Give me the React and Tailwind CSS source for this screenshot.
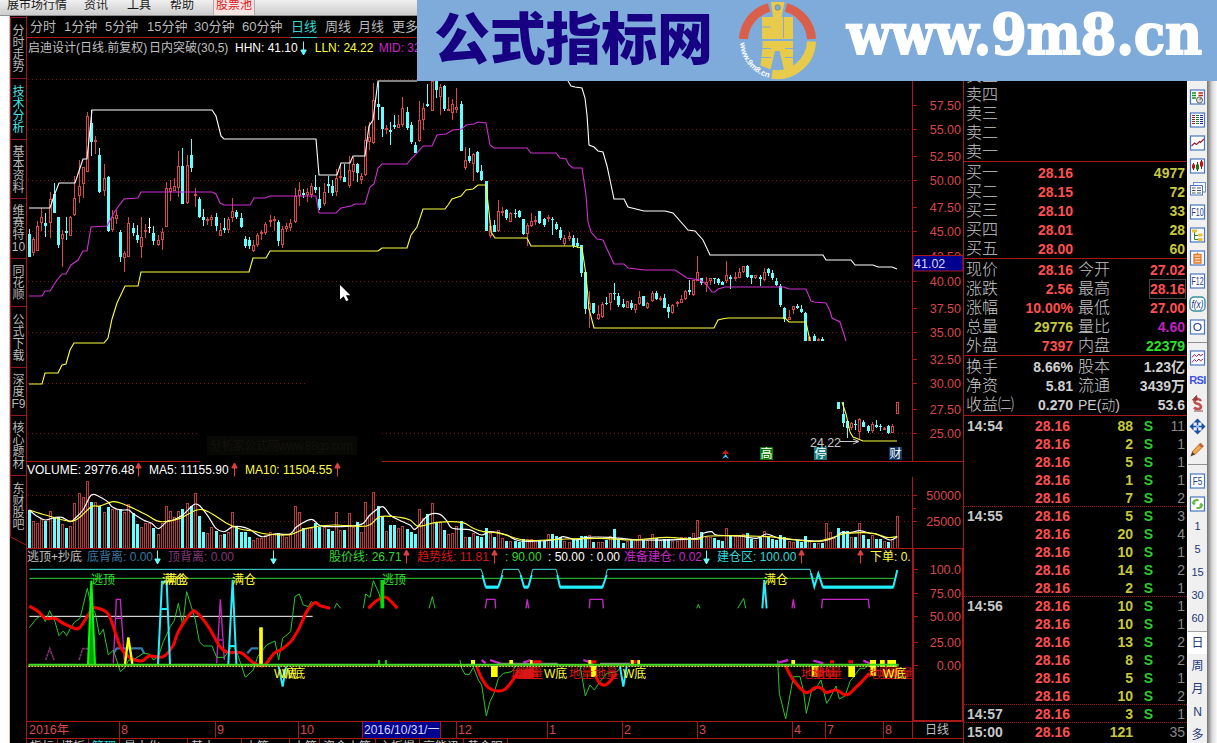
/**
 * Stock terminal: daily candlestick view with volume and indicator panes,
 * a level-1 quote panel and the tool strip on the right.
 */
import clsx from "clsx";

const PITCH = 4.152;
const FIRST_X = 29.3;
const UP = "#d84848";
const DOWN = "#66ffff";
const LINE = "#a81818";

// One entry per trading day: [direction, high, body top, body bottom, low]; null = not drawn
const CANDLES = [
  ["d", 229, 234, 257, 257], ["u", 237, 239, 253, 256], ["u", 221, 226, 251, 251], ["u", 208, 217, 223, 231],
  ["d", 213, 223, 226, 237], ["u", 192, 199, 223, 238], ["d", 183, 194, 213, 213], ["d", 217, 217, 245, 248],
  ["u", 230, 234, 239, 267], ["d", 217, 231, 233, 240], ["u", 216, 217, 236, 236], ["u", 176, 198, 215, 216],
  ["u", 160, 186, 196, 203], ["u", 167, 167, 184, 198], ["u", 112, 116, 172, 172], ["d", 110, 123, 142, 156],
  ["u", 136, 140, 141, 154], ["d", 148, 155, 192, 193], ["u", 164, 178, 191, 196], ["d", 176, 177, 231, 232],
  ["u", 210, 217, 230, 232], ["u", 210, 215, 219, 224], ["d", 230, 232, 257, 262], ["u", 251, 253, 258, 272],
  ["u", 217, 223, 257, 257], ["d", 223, 228, 233, 236], ["d", 225, 235, 240, 243], ["u", 217, 237, 247, 258],
  ["u", 224, 230, 232, 238], ["w", 218, 227, 228, 233], ["d", 226, 233, 241, 245], ["u", 235, 240, 245, 246],
  ["u", 228, 232, 240, 250], ["u", 182, 188, 227, 227], ["u", 180, 188, 192, 201], ["u", 178, 186, 191, 191],
  ["u", 151, 166, 188, 197], ["d", 148, 166, 204, 204], ["u", 155, 165, 203, 204], ["d", 139, 155, 168, 172],
  ["u", 188, 194, 196, 207], ["d", 197, 199, 217, 218], ["d", 209, 217, 220, 226], ["u", 217, 219, 221, 225],
  ["u", 215, 217, 220, 226], ["d", 213, 217, 226, 231], ["u", 223, 230, 236, 236], ["d", 218, 228, 230, 233],
  ["u", 217, 219, 230, 233], ["u", 198, 211, 218, 222], ["d", 210, 212, 217, 219], ["d", 213, 218, 227, 228],
  ["d", 236, 239, 246, 248], ["d", 237, 240, 246, 249], ["u", 240, 245, 251, 252], ["u", 233, 235, 245, 247],
  ["u", 230, 232, 234, 240], ["u", 222, 224, 233, 235], ["u", 215, 220, 222, 227], ["u", 216, 219, 221, 231],
  ["d", 220, 222, 241, 246], ["u", 226, 229, 245, 248], ["u", 223, 226, 229, 232], ["u", 219, 223, 228, 231],
  ["u", 188, 196, 222, 223], ["u", 182, 190, 196, 206], ["d", 189, 193, 195, 198], ["u", 188, 192, 195, 202],
  ["u", 183, 186, 195, 198], ["d", 175, 187, 190, 193], ["d", 187, 199, 208, 210], ["u", 183, 192, 204, 206],
  ["d", 176, 184, 186, 193], ["d", 180, 186, 193, 196], ["u", 169, 178, 192, 196], ["u", 165, 176, 178, 180],
  ["d", 164, 177, 182, 182], ["u", 156, 170, 186, 188], ["u", 157, 164, 172, 181], ["d", 163, 164, 173, 182],
  ["u", 173, 176, 180, 184], ["u", 126, 140, 175, 176], ["u", 122, 137, 142, 150], ["u", 83, 100, 143, 144],
  ["d", 82, 104, 107, 120], ["d", 107, 107, 129, 137], ["u", 125, 128, 129, 134], ["d", 122, 130, 132, 145],
  ["d", 115, 125, 127, 129], ["u", 115, 124, 128, 128], ["u", 97, 108, 125, 127], ["d", 107, 112, 128, 130],
  ["d", 122, 125, 142, 144], ["d", 142, 145, 153, 153], ["u", 101, 120, 141, 142], ["u", 103, 108, 120, 130],
  ["d", 84, 104, 106, 107], ["u", 81, 81, 111, 111], ["d", 81, 81, 90, 98], ["u", 84, 87, 97, 115],
  ["d", 85, 86, 109, 111], ["u", 97, 109, 111, 111], ["u", 99, 104, 113, 120], ["u", 88, 107, 110, 113],
  ["d", 101, 104, 151, 151], ["u", 147, 160, 168, 170], ["d", 148, 156, 161, 163], ["u", 153, 154, 164, 181],
  ["d", 151, 152, 172, 173], ["d", 165, 171, 180, 181], ["d", 181, 181, 231, 231], ["u", 220, 226, 236, 238],
  ["d", 220, 225, 232, 232], ["u", 200, 211, 231, 232], ["u", 207, 211, 213, 216], ["d", 209, 210, 218, 220],
  ["u", 212, 213, 222, 222], ["d", 209, 213, 214, 218], ["d", 210, 211, 217, 218], ["d", 219, 219, 234, 235],
  ["u", 223, 225, 234, 246], ["u", 213, 221, 226, 227], ["u", 216, 220, 221, 225], ["d", 211, 211, 223, 224],
  ["d", 218, 219, 225, 227], ["u", 215, 217, 219, 222], ["d", 217, 219, 220, 235], ["d", 222, 224, 229, 230],
  ["d", 227, 230, 238, 240], ["u", 235, 238, 244, 246], ["u", 232, 236, 239, 241], ["d", 235, 238, 246, 248],
  ["d", 238, 243, 246, 248], ["d", 245, 245, 273, 277], ["d", 270, 272, 309, 314], ["u", 291, 303, 310, 328],
  ["d", 303, 303, 313, 314], ["u", 305, 314, 319, 320], ["u", 302, 304, 317, 318], ["d", 297, 303, 304, 305],
  ["u", 293, 293, 303, 310], ["d", 283, 293, 294, 300], ["d", 293, 296, 305, 307], ["d", 299, 304, 307, 308],
  ["u", 301, 301, 308, 308], ["d", 300, 303, 308, 310], ["u", 304, 304, 310, 313], ["u", 291, 297, 304, 305],
  ["d", 296, 296, 306, 306], ["u", 302, 303, 308, 309], ["u", 291, 293, 301, 302], ["d", 291, 293, 299, 300],
  ["u", 296, 298, 299, 301], ["d", 294, 298, 308, 308], ["d", 304, 307, 312, 318], ["u", 304, 305, 313, 314],
  ["u", 301, 302, 304, 307], ["u", 295, 299, 303, 303], ["u", 290, 291, 299, 300], ["d", 280, 290, 292, 295],
  ["u", 280, 280, 295, 296], ["u", 256, 272, 281, 281], ["d", 278, 278, 283, 285], ["u", 277, 282, 285, 292],
  ["u", 278, 278, 281, 285], ["d", 278, 278, 279, 284], ["d", 278, 279, 283, 285], ["d", 281, 282, 285, 285],
  ["u", 261, 275, 281, 283], ["d", 275, 277, 279, 289], ["u", 272, 277, 279, 281], ["u", 268, 272, 278, 278],
  ["u", 266, 266, 272, 273], ["d", 265, 266, 277, 278], ["d", 275, 275, 278, 284], ["u", 275, 275, 278, 279],
  ["d", 275, 277, 279, 286], ["u", 268, 272, 280, 281], ["d", 268, 269, 273, 276], ["d", 270, 273, 278, 280],
  ["d", 278, 281, 285, 286], ["d", 284, 286, 305, 307], ["d", 307, 308, 319, 322], ["u", 310, 317, 320, 320],
  ["u", 306, 306, 310, 314], ["d", 304, 306, 308, 309], ["d", 305, 309, 312, 313], ["d", 312, 313, 341, 341],
  ["u", 336, 337, 341, 341], ["d", 334, 336, 341, 341], ["u", 338, 339, 341, 341], ["d", 337, 339, 341, 341],
  null, null, null,
  ["d", 402, 402, 409, 409], ["d", 402, 414, 423, 427], ["d", 420, 421, 428, 438], ["u", 422, 423, 428, 430],
  ["d", 420, 424, 425, 430], ["u", 418, 419, 432, 440], ["d", 420, 422, 427, 427], ["d", 425, 426, 431, 433],
  ["u", 422, 424, 431, 433], ["d", 420, 425, 427, 428], ["d", 424, 426, 427, 431], ["u", 427, 428, 429, 430],
  ["d", 425, 426, 433, 434], ["u", 424, 426, 433, 433], ["u", 402, 402, 414, 414],
];

// Top edge of each volume bar
const VOLUME = [
  510, 521, 523, 519, 521, 511, 517, 517, 524, 528, 526, 503, 493, 497, 481, 502, 502, 506, 512, 507,
  509, 509, 509, 512, 504, 513, 524, 527, 523, 523, 528, 534, 523, 506, 511, 517, 511, 509, 503, 506,
  493, 516, 532, 533, 527, 531, 535, 534, 532, 512, 526, 532, 532, 537, 540, 538, 538, 535, 532, 534,
  533, 535, 537, 534, 506, 512, 528, 528, 528, 523, 527, 527, 529, 531, 512, 530, 530, 513, 527, 522,
  532, 502, 515, 492, 506, 517, 531, 525, 525, 528, 526, 529, 532, 534, 509, 518, 514, 503, 522, 522,
  530, 534, 533, 526, 521, 537, 537, 533, 536, 537, 528, 533, 537, 530, 538, 541, 541, 541, 542, 539,
  539, 539, 540, 540, 541, 534, 534, 536, 537, 541, 542, 539, 539, 536, 536, 535, 542, 542, 542, 540,
  536, 529, 539, 543, 541, 540, 540, 535, 540, 540, 534, 538, 540, 539, 539, 541, 541, 537, 537, 537,
  533, 520, 532, 537, 537, 538, 540, 541, 528, 535, 536, 536, 534, 533, 539, 540, 537, 531, 537, 539,
  540, 535, 537, 541, 542, 540, 542, 536, 541, 543, 543, 543, 523, 532, 538, 528, 531, 531, 537, 537,
  523, 535, 539, 535, 539, 539, 541, 542, 539, 516,
];

const HHN = [
  "29,208 50,208 54,196 59,183 75,183 79,171 83,159 87,159 92,110 212,110 216,116 221,136 224,139 316,139 319,175 337,175 341,163 350,163 353,156 365,156 369,126 373,120 378,81 417,81",
  "568,81 571,86 575,87 582,88 585,98 587,115 589,145 594,147 598,151 603,152 607,166 610,180 614,199 624,199 628,207 640,210 644,211 665,211 673,213 688,230 695,231 703,240 710,255 823,255 826,260 851,260 855,265 873,265 878,267 892,267 897,269",
];
const MID =
  "29,296 42,296 45,291 50,291 57,280 62,274 66,274 71,265 78,260 83,251 87,251 91,227 107,226 115,211 124,199 138,198 141,192 212,192 216,194 220,203 224,205 250,205 254,198 265,198 270,196 316,196 319,213 336,213 341,208 351,206 355,204 365,204 370,187 374,184 378,168 382,164 407,164 411,159 417,153 423,146 432,146 437,135 446,134 453,130 462,129 466,125 474,124 478,122 486,123 490,145 494,148 527,148 531,153 556,153 560,158 566,159 569,165 573,168 582,168 586,195 588,222 591,232 597,239 603,240 607,249 614,264 624,264 628,268 645,270 675,270 687,278 700,280 706,284 712,292 715,292 718,289 725,287 784,287 789,289 806,289 811,301 814,302 826,303 830,311 832,318 840,322 846,341";
const LLN = [
  "29,384 42,384 45,373 58,373 62,365 66,364 70,350 74,343 104,343 108,338 112,319 117,303 125,286 138,286 141,272 249,272 253,258 266,258 270,251 378,251 382,248 407,248 411,235 417,227 423,209 445,209 448,205 452,199 461,196 466,190 473,189 478,185 486,185 489,212 491,232 495,238 527,238 531,246 573,246 582,248 586,275 589,309 594,328 714,328 718,320 722,319 728,318 785,318 789,322 806,322 810,341",
  "842,402 846,414 850,432 853,437 863,441 897,441",
];

// Volume and indicator traces are stored at three units per pixel
const MA5 =
  "88,150 110,168 136,180 165,172 186,172 211,185 225,175 249,150 274,105 298,110 323,125 336,140 361,150 386,150 398,160 430,180 455,190 475,206 500,185 520,180 548,165 574,140 586,132 600,138 625,170 648,205 673,215 698,200 722,200 748,208 785,230 822,222 870,222 890,200 934,178 960,197 1000,200 1060,198 1090,190 1110,165 1147,140 1170,165 1197,180 1230,195 1245,208 1270,180 1290,163 1320,163 1340,182 1357,205 1408,209 1445,225 1470,215 1520,225 1560,243 1660,240 1690,230 1730,240 1760,232 1830,232 1930,240 2090,235 2110,220 2135,215 2150,225 2220,228 2270,235 2300,222 2340,235 2430,242 2470,243 2505,232 2525,218 2550,218 2580,212 2610,220 2630,222 2670,240 2692,230";
const MA10 =
  "88,150 136,165 205,183 235,175 274,140 298,138 340,125 370,132 400,145 440,165 480,185 540,175 590,150 625,155 680,190 720,207 760,213 800,222 870,224 920,205 1000,195 1100,198 1140,170 1200,172 1230,180 1250,197 1270,197 1310,187 1385,187 1420,205 1450,215 1500,220 1570,240 1640,240 1700,237 1800,235 1900,240 2000,232 2090,238 2130,228 2300,230 2430,244 2480,238 2530,222 2580,218 2620,220 2660,232 2692,230";

const PRICE_LINE = [
  "88,503 110,475 125,465 136,485 149,452 165,485 177,527 190,513 200,527 211,505 223,487 240,475 262,385 274,440 286,460 298,525 310,508 325,585 340,570 361,635 375,622 386,600 400,600 430,580 448,582 460,600 475,590 490,545 511,500 523,482 535,430 548,495 560,395 574,440 586,480 598,545 611,558 636,558 650,592 673,592 698,555 710,575 736,652 760,630 773,590 800,555 825,543 836,600 848,535 872,515 885,410 898,402 910,435 925,440 934,425 942,432",
  "1003,445 1010,430 1022,445", "1090,445 1097,402 1110,412 1120,362 1137,400 1147,440",
  "1287,445 1297,410 1305,445", "2090,445 2095,433 2100,445", "2213,445 2231,415 2237,445",
  "1380,600 1385,625 1395,643 1408,643 1420,622 1435,660 1445,675 1459,768 1470,725 1482,700 1495,655 1510,640 1535,635 1550,615",
  "1740,615 1756,708 1770,675 1783,690 1800,665 1820,640 1850,635 1870,615",
  "2333,600 2338,700 2357,777 2380,650 2400,650 2410,690 2419,760 2435,690 2445,690 2463,660 2480,730 2490,715 2508,678 2518,717 2535,708 2550,665 2580,625 2595,625 2620,600",
];
const TREND_LINE = [
  "88,438 115,455 136,475 165,475 186,488 211,500 235,506 255,480 274,450 286,443 323,460 345,515 361,560 386,590 424,603 448,588 490,590 520,555 535,515 574,458 590,458 625,500 660,560 685,578 722,578 760,608 785,618 798,612 822,580 845,568 872,545 897,505 920,455 945,428 960,437 990,445",
  "1105,445 1130,422 1158,412 1192,445",
  "1430,620 1445,655 1465,683 1492,693 1515,688 1535,665 1555,635",
  "1770,612 1783,640 1800,670 1820,673 1850,640",
  "2355,615 2380,660 2418,698 2445,683 2465,685 2480,698 2508,690 2540,705 2570,680 2590,660 2608,640",
];
const MAGENTA_TRACES = [
  "340,610 349,418 361,418 373,600", "345,475 367,475", "650,610 661,418 673,600", "655,540 667,540",
  "1456,445 1460,418 1485,418 1487,445", "1578,445 1582,418 1586,445", "1768,445 1770,418 1808,418 1810,445",
  "2376,445 2380,418 2384,445", "2465,445 2467,418 2605,418 2608,445",
];
const CYAN_TRACES = [
  "474,612 486,365 500,365 510,612", "484,447 502,447", "685,612 698,360 709,612", "690,558 706,558",
  "2287,445 2293,360 2300,445", "836,620 848,680 858,620", "1860,620 1870,680 1880,620",
  "1447,345 1457,380 1495,380 1507,345", "1562,345 1572,380 1585,380 1595,345",
  "1672,345 1680,380 1808,380 1820,345", "2433,340 2443,380 2455,340 2468,380 2680,380 2692,330",
];
const CYAN_TOP = [
  "88,328 1443,328 1449,345", "1505,345 1509,328 1555,328 1563,345", "1594,345 1598,328 1668,328 1673,345",
  "1818,345 1822,328 2430,328 2434,345",
];

const PRICE_TICKS = [
  [105, "57.50"], [129.5, "55.00"], [156, "52.50"], [180.5, "50.00"], [207, "47.50"], [231, "45.00"],
  [256, "42.50"], [281.5, "40.00"], [308, "37.50"], [332.5, "35.00"], [359, "32.50"], [383.5, "30.00"],
  [409, "27.50"], [433.5, "25.00"],
];
const OSC_TICKS = [[569, "100.0"], [593.5, "75.00"], [616.5, "50.00"], [642.5, "25.00"], [665.5, "0.00"]];

const PERIODS = [
  ["分时", "w-[34px]"], ["1分钟", "w-[41px]"], ["5分钟", "w-[42px]"], ["15分钟", "w-[47px]"],
  ["30分钟", "w-[48px]"], ["60分钟", "w-[49px]"], ["日线", "w-[34px]"], ["周线", "w-[33px]"],
  ["月线", "w-[34px]"], ["更多", "w-[30px]"],
];

const SIDE_TABS = [
  { chars: ["分", "时", "走", "势"], h: "h-[61px]" },
  { chars: ["技", "术", "分", "析"], h: "h-[61px]", active: true },
  { chars: ["基", "本", "资", "料"], h: "h-[59px]" },
  { chars: ["维", "赛", "特", "10"], h: "h-[60px]" },
  { chars: ["同", "花", "顺"], h: "h-[48px]" },
  { chars: ["公", "式", "下", "载"], h: "h-[61px]" },
  { chars: ["深", "度", "F9"], h: "h-[48px]" },
  { chars: ["核", "心", "题", "材"], h: "h-[60px]" },
  { chars: ["东", "财", "股", "吧"], h: "h-[61px]" },
];

const BIDS = [
  ["买一", "28.16", "4977"], ["买二", "28.15", "72"], ["买三", "28.10", "33"], ["买四", "28.01", "28"], ["买五", "28.00", "60"],
];
const STATS = [
  ["现价", "28.16", "text-[#ff4f4f]", "今开", "27.02", "text-[#ff4f4f]"],
  ["涨跌", "2.56", "text-[#ff4f4f]", "最高", "28.16", "text-[#ff4f4f]"],
  ["涨幅", "10.00%", "text-[#ff4f4f]", "最低", "27.00", "text-[#ff4f4f]"],
  ["总量", "29776", "text-[#c8c83c]", "量比", "4.60", "text-[#c020c0]"],
  ["外盘", "7397", "text-[#ff4f4f]", "内盘", "22379", "text-[#2ce02c]"],
];
const FUNDAMENTALS = [
  ["换手", "8.66%", "text-[#d0d0d0]", "股本", "1.23亿", "text-[#d0d0d0]"],
  ["净资", "5.81", "text-[#d0d0d0]", "流通", "3439万", "text-[#d0d0d0]"],
  ["收益㈡", "0.270", "text-[#d0d0d0]", "PE(动)", "53.6", "text-[#d0d0d0]"],
];
const TICKS = [
  ["14:54", 88, 11], ["", 2, 1], ["", 5, 1], ["", 1, 1], ["", 7, 2],
  ["14:55", 5, 3], ["", 20, 4], ["", 10, 1], ["", 14, 2], ["", 2, 1],
  ["14:56", 10, 1], ["", 10, 1], ["", 13, 2], ["", 8, 2], ["", 5, 1], ["", 10, 2],
  ["14:57", 3, 1], ["15:00", 121, 35],
];

const MONTHS = [
  ["2016年", "w-[92px]"], ["8", "w-[96px]"], ["9", "w-[83px]"], ["10", "w-[64px]"],
  ["2016/10/31/一", "w-[78px]"], ["", "w-[16px]"], ["12", "w-[91px]"], ["1", "w-[75px]"],
  ["2", "w-[75px]"], ["3", "w-[95px]"], ["4", "w-[33px]"], ["7", "w-[58px]"], ["8", "w-[29px]"],
];

function Arrow({ up, className }) {
  return (
    <svg width="7" height="14" viewBox="0 0 7 14" className={clsx("shrink-0", className)}>
      {up ? (
        <path d="M3.5 13.5V2M3.5 0L0.8 5h5.4z" stroke="#e04040" fill="#e04040" strokeWidth="1" />
      ) : (
        <path d="M3.5 0.5V12M3.5 14L0.8 9h5.4z" stroke="#66ffff" fill="#66ffff" strokeWidth="1" />
      )}
    </svg>
  );
}

function Lines({ items, ...props }) {
  return items.map((points) => <polyline key={points} points={points} fill="none" {...props} />);
}

/** Catmull-Rom spline through an "x,y x,y" list, as cubic beziers. */
function curve(points) {
  const p = points.split(" ").map((pair) => pair.split(",").map(Number));
  let d = `M${p[0].join(" ")}`;
  for (let i = 0; i < p.length - 1; i++) {
    const a = p[i - 1] ?? p[i];
    const b = p[i];
    const c = p[i + 1];
    const e = p[i + 2] ?? c;
    d += `C${b[0] + (c[0] - a[0]) / 6} ${b[1] + (c[1] - a[1]) / 6} ${c[0] - (e[0] - b[0]) / 6} ${c[1] - (e[1] - b[1]) / 6} ${c[0]} ${c[1]}`;
  }
  return d;
}

function Curves({ items, ...props }) {
  return items.map((points) => <path key={points} d={curve(points)} fill="none" {...props} />);
}

function Candles() {
  return CANDLES.map((candle, i) => {
    if (!candle) return null;
    const [dir, high, top, bottom, low] = candle;
    const x = Math.round(FIRST_X + i * PITCH - 0.5);
    if (dir === "u") {
      return (
        <g key={i} stroke={UP} fill="#000">
          <path d={`M${x + 0.5} ${high}V${low}`} />
          <rect x={x - 0.5} y={top + 0.5} width="2" height={Math.max(bottom - top - 1, 1)} />
        </g>
      );
    }
    const color = dir === "w" ? "#fff" : DOWN;
    return (
      <g key={i} fill={color}>
        <rect x={x} y={high} width="1" height={low - high} />
        <rect x={x - 1} y={top} width="3" height={bottom - top} />
      </g>
    );
  });
}

function PriceChart() {
  return (
    <svg width="937" height="405" viewBox="27 57 937 405" className="block">
      <g stroke="#7c1414" strokeDasharray="1 3" shapeRendering="crispEdges">
        {[79, 129, 180, 231, 281, 332, 433].map((y) => (
          <path key={y} d={y === 433 ? `M28 ${y}.5H200M382 ${y}.5H912` : `M28 ${y}.5H912`} />
        ))}
        <path d="M28 383.5H305" />
      </g>
      <g stroke={LINE} shapeRendering="crispEdges">
        <path d="M27 461.5H200M382 461.5H964M912.5 57V462" />
        {PRICE_TICKS.map(([y]) => (
          <path key={y} d={`M913 ${Math.floor(y)}.5h4`} />
        ))}
      </g>
      <g shapeRendering="crispEdges">
        <Candles />
      </g>
      <g strokeWidth="1.1">
        <Lines items={[MID]} stroke="#d030d0" />
        <Lines items={LLN} stroke="#ffff40" />
        <Lines items={HHN} stroke="#fff" />
      </g>
      <g fontSize="12.5" fill="#d84848" textAnchor="end">
        {PRICE_TICKS.map(([y, label]) => (
          <text key={label} x="961" y={y + 4.5}>{label}</text>
        ))}
      </g>
      <rect x="913" y="255.5" width="50" height="15.5" fill="#000090" stroke={LINE} />
      <text x="914" y="267.5" fontSize="12.5" fill="#d8d8ff">41.02</text>

      <rect x="207" y="436" width="150" height="19" fill="#080805" />
      <text x="210" y="450" fontSize="12" fill="#141210" textLength="143">分析家公式网www.88gs.com</text>

      <text x="810" y="447" fontSize="12.5" fill="#c8c8c8" textLength="31">24.22</text>
      <path d="M840 441.5h18M853 439l6 2.5-6 2.5" stroke="#c8c8c8" fill="none" />
      <path d="M722 454l3.5-4 3.5 4z" fill="#d01818" />
      <path d="M722 459l3.5-5 3.5 5-3.5-2z" fill="#50b8ff" />
      <g fontSize="12" fill="#fff">
        <rect x="760" y="447" width="13" height="13" fill="#0c780c" />
        <text x="760.5" y="458">高</text>
        <rect x="814" y="447" width="13" height="13" fill="#187878" />
        <text x="814.5" y="458">停</text>
        <rect x="889" y="447" width="13" height="13" fill="#103868" />
        <text x="889.5" y="458">财</text>
      </g>
      <path d="M340 285v14.5l3.6-3.2 2.6 5 2.3-1.2-2.6-4.9h4.4z" fill="#fff" />
    </svg>
  );
}

function VolumeChart() {
  return (
    <svg width="937" height="72" viewBox="27 477 937 72" className="block">
      <path d="M28 495.5H912M28 521.5H912" stroke="#7c1414" strokeDasharray="1 3" shapeRendering="crispEdges" />
      <g shapeRendering="crispEdges">
        {VOLUME.map((top, i) => {
          const dir = CANDLES[i] ? CANDLES[i][0] : "u";
          const x = Math.round(FIRST_X + i * PITCH - 0.5);
          return dir === "d" ? (
            <rect key={i} x={x - 1} y={top} width="3" height={548 - top} fill={DOWN} />
          ) : (
            <rect key={i} x={x - 0.5} y={top + 0.5} width="2" height={548 - top} fill="#000" stroke="#b83c3c" />
          );
        })}
        <path d="M27 548.5H964M912.5 462V549M913 495.5h4M913 508.5h3M913 521.5h4" stroke={LINE} />
      </g>
      <g transform="translate(0 460) scale(0.33333)" strokeWidth="3.5">
        <Curves items={[MA5]} stroke="#fff" />
        <Curves items={[MA10]} stroke="#ffff40" />
      </g>
      <g fontSize="12.5" fill="#d84848" textAnchor="end">
        <text x="961" y="500">50000</text>
        <text x="961" y="526">25000</text>
      </g>
    </svg>
  );
}

function OscillatorChart() {
  return (
    <svg width="937" height="157" viewBox="27 565 937 157" className="block overflow-visible">
      <g transform="translate(0 460) scale(0.33333)" strokeWidth="3">
        <path d="M88 355H2682" stroke="#30d030" />
        <path d="M88 469H938" stroke="#fff" />
        <Lines items={["137,600 149,566 162,600", "237,600 248,566 278,566"]} stroke="#803070" strokeWidth="5" strokeDasharray="9 2" />
        <Lines items={["340,580 350,565 425,565 432,580", "742,580 755,565 775,565"]} stroke="#3878a8" strokeWidth="7" />
        <Lines items={CYAN_TOP} stroke="#40e0e0" />
        <Lines items={MAGENTA_TRACES} stroke="#c828c8" strokeWidth="4" />
        <Lines items={PRICE_LINE} stroke="#28c828" />
        <Curves items={TREND_LINE} stroke="#ff0000" strokeWidth="9" strokeLinejoin="round" />
        <Lines items={CYAN_TRACES} stroke="#20f0ff" strokeWidth="6" />
        <path d="M1457 382h38M1572 382h13M1680 382h128M2468 382h212" stroke="#20f0ff" strokeWidth="9" />
        <path d="M264 612L274 362 285 612" fill="#00a000" stroke="#00ff00" strokeWidth="6" />
        <path d="M1147 360V445" stroke="#00e000" strokeWidth="11" />
        <path d="M1137 600v14M1158 600v14" stroke="#00ff00" strokeWidth="5" />
        <path d="M375 612L385 532 397 612" fill="none" stroke="#ffff00" strokeWidth="7" />
        <path d="M783 502V612" stroke="#ffff00" strokeWidth="11" />

        {/* Signal fragments sitting on the zero line */}
        <path d="M1445 600l12 10M1470 600l30 10M1570 608l22-8M1750 600l30 10M2335 608l30-8M2440 602l30 8M2590 602l20 8" stroke="#c828c8" strokeWidth="7" />
        <path d="M1493 611h180M1800 611h90" stroke="#808080" strokeWidth="6" />
        <path d="M1600 605h24M1775 605h14M1890 605h20M2490 605h12M2545 605h14M2640 605h16" stroke="#ff0000" strokeWidth="9" />
        <g fill="#ffff00">
          <rect x="1413" y="600" width="12" height="14" />
          <rect x="1528" y="600" width="11" height="14" />
          <rect x="1590" y="600" width="8" height="14" />
          <rect x="1765" y="600" width="9" height="14" />
          <rect x="1893" y="600" width="8" height="14" />
          <rect x="1912" y="600" width="8" height="14" />
          <rect x="2374" y="600" width="11" height="14" />
          <rect x="1473" y="618" width="20" height="33" />
          <rect x="1773" y="618" width="17" height="33" />
          <rect x="2435" y="618" width="20" height="33" />
          <rect x="2545" y="618" width="20" height="33" />
          <rect x="2610" y="600" width="18" height="48" />
          <rect x="2640" y="600" width="14" height="20" />
          <rect x="2662" y="600" width="26" height="20" />
        </g>
        <path d="M85 614H2696" stroke="#40e020" strokeWidth="6" />
        <path d="M85 619H2696" stroke="#ffff60" strokeWidth="3" strokeDasharray="6 3" />
        {/* Overprinted signals form a solid wedge here */}
        <path d="M1545 655L1580 628 1600 624 1600 655z" fill="#e01010" />
      </g>

      <g fontSize="12">
        <g fill="#30e030">
          <text x="91" y="584">逃顶</text>
          <text x="382" y="584">逃顶</text>
        </g>
        <g fill="#d81818">
          <text x="511" y="678">地量</text>
          <text x="515" y="678">地量</text>
          <text x="519" y="678">地量</text>
          <text x="569" y="678">地量</text>
          <text x="594" y="678">地量</text>
          <text x="801" y="678">地量</text>
          <text x="812" y="678">地量</text>
          <text x="818" y="678">地量</text>
          <text x="868" y="678">地量</text>
          <text x="878" y="678">地量</text>
          <text x="889" y="678">地量</text>
        </g>
        <g fill="#ffff30">
          <text x="162" y="584">满仓</text>
          <text x="165" y="584">满仓</text>
          <text x="232" y="584">满仓</text>
          <text x="764" y="584">满仓</text>
          <text x="274" y="678">W底</text>
          <text x="282" y="678">W底</text>
          <text x="544" y="678">W底</text>
          <text x="623" y="678">W底</text>
          <text x="883" y="678">W底</text>
        </g>
      </g>

      <g stroke={LINE} shapeRendering="crispEdges">
        <path d="M27 721.5H913" />
        <path d="M913 549V721H963V549" fill="none" strokeWidth="2" />
        {OSC_TICKS.map(([y]) => (
          <path key={y} d={`M913 ${Math.floor(y)}.5h5`} />
        ))}
      </g>
      <g fontSize="12.5" fill="#d84848" textAnchor="end">
        {OSC_TICKS.map(([y, label]) => (
          <text key={label} x="961" y={y + 4.5}>{label}</text>
        ))}
      </g>
    </svg>
  );
}

function StatRows({ rows }) {
  return rows.map(([label, value, color, label2, value2, color2]) => (
    <div key={label} className="flex h-[19px] items-center">
      <span className="w-[34px] shrink-0 pl-[2px] text-base leading-[19px] font-light whitespace-nowrap text-[#c8c8c8]">{label}</span>
      <span className={clsx("w-[75px] text-right text-sm leading-[18px] font-bold", color)}>{value}</span>
      <span className="w-[44px] shrink-0 pl-[5px] text-base leading-[19px] font-light whitespace-nowrap text-[#c8c8c8]">
        {label2.startsWith("PE") ? <span className="text-sm">{label2}</span> : label2}
      </span>
      <span
        className={clsx(
          "mr-[2px] ml-auto text-right text-sm leading-[18px] font-bold",
          color2,
          label2 === "最高" && "outline outline-[#484848]",
        )}
      >
        {value2}
      </span>
    </div>
  ));
}

function QuotePanel() {
  return (
    <section className="w-[224px] shrink-0 border-l border-[#a81818] text-[#c8c8c8]">
      <div className="border-b border-[#a81818] pt-[50px]">
        {["卖五", "卖四", "卖三", "卖二", "卖一"].map((label) => (
          <div key={label} className="h-[19px] pl-[2px] text-base leading-[19px] font-light">{label}</div>
        ))}
      </div>
      <div className="border-b border-[#a81818] pt-px">
        {BIDS.map(([label, price, volume]) => (
          <div key={label} className="flex h-[19px] items-center">
            <span className="w-[34px] pl-[2px] text-base leading-[19px] font-light">{label}</span>
            <span className="w-[75px] text-right text-sm leading-[18px] font-bold text-[#ff4f4f]">{price}</span>
            <span className="mr-[2px] ml-auto text-sm leading-[18px] font-bold text-[#c8c83c]">{volume}</span>
          </div>
        ))}
      </div>
      <div className="border-b border-[#a81818] pt-px">
        <StatRows rows={STATS} />
      </div>
      <div className="border-b border-[#a81818] py-px">
        <StatRows rows={FUNDAMENTALS} />
      </div>
      {TICKS.map(([time, volume, count], i) => (
        <div
          key={i}
          className={clsx(
            "flex h-[18px] items-center border-t border-dotted text-sm leading-[16px] font-bold",
            time && i > 0 ? "border-[#a01818]" : "border-transparent",
          )}
        >
          <span className="w-[56px] pl-[3px]">{time}</span>
          <span className="w-[50px] text-right text-[#ff4f4f]">28.16</span>
          <span className="w-[63px] text-right text-[#c8c83c]">{volume}</span>
          <span className="w-[20px] text-right text-[#2ccc2c]">{time === "15:00" ? "" : "S"}</span>
          <span className="mr-[2px] ml-auto font-normal text-[#888]">{count}</span>
        </div>
      ))}
    </section>
  );
}

/** Square outline used by most of the tool strip glyphs. */
function ToolFrame({ children }) {
  return (
    <svg width="17" height="16" viewBox="0 0 17 16">
      <rect x="1.5" y="1" width="14" height="14" fill="#fff" stroke="#4878c0" strokeWidth="1.2" />
      {children}
    </svg>
  );
}

function ToolText({ text }) {
  return (
    <ToolFrame>
      <text x={text.length > 2 ? 2.5 : 3.8} y="12" fontSize="10" fill="#203888" textLength={text.length > 2 ? 12 : 9.5} lengthAdjust="spacingAndGlyphs">
        {text}
      </text>
    </ToolFrame>
  );
}

const CHART_TOOLS = [
  <ToolFrame>
    <path d="M3 4h4M3 6.5h4M3 9h4" stroke="#189018" strokeWidth="1.3" />
    <path d="M9.5 4h4.5M9.5 6.5h4.5" stroke="#c02020" strokeWidth="1.3" />
    <circle cx="10.5" cy="11" r="3" fill="#e0e0e0" stroke="#606060" />
    <path d="M10.5 11l2-2" stroke="#404040" />
  </ToolFrame>,
  <ToolFrame>
    <path d="M3 3.5h3M3 5.5h3M3 7.5h3M3 9.5h3M3 11.5h3" stroke="#a02020" />
    <path d="M7 3.5h3M7 5.5h3M7 7.5h3M7 9.5h3M7 11.5h3" stroke="#108040" />
    <path d="M11 3.5h3M11 5.5h3M11 7.5h3M11 9.5h3M11 11.5h3" stroke="#2020b0" />
  </ToolFrame>,
  <ToolFrame>
    <path d="M2.5 11l3-3 2 1.5 3-3 1 1 3.5-3.5" fill="none" stroke="#a01838" strokeWidth="1.2" />
  </ToolFrame>,
  <ToolFrame>
    <path d="M4.5 5v7M8.5 4v9M12.5 2v9" stroke="#303030" />
    <path d="M3 6.5h3v4H3zM11 3.5h3v5h-3z" fill="#d01010" />
    <path d="M7 6.5h3v5H7z" fill="#108010" />
  </ToolFrame>,
  <svg width="17" height="16" viewBox="0 0 17 16">
    <rect x="4.5" y="1.5" width="12" height="9.5" fill="#fff" stroke="#6890d0" />
    <rect x="1.5" y="4.5" width="12" height="9.5" fill="#fff" stroke="#4878c0" />
    <path d="M3 7h3.5M8 7h4M3 9.5h3.5M8 9.5h4M3 12h3.5M8 12h4" stroke="#505050" />
  </svg>,
  <ToolText text="F10" />,
  <ToolFrame>
    <path d="M5.5 5v7.5h4M5.5 8.5h4" fill="none" stroke="#308040" />
    <path d="M3 2.5h5v3H3zM9 6.5h4.5v3H9zM9 11h4.5v3H9z" fill="#f0c030" />
  </ToolFrame>,
  <ToolFrame>
    <path d="M5 4.5h7v8.5h-7zM5 7.3h7M5 10.2h7M8.5 2.5v2" fill="#f8d0a8" stroke="#e07828" strokeWidth="1.3" />
  </ToolFrame>,
  <ToolText text="F12" />,
  <svg width="17" height="16" viewBox="0 0 17 16">
    <rect x="1" y="1" width="15" height="14" rx="4" fill="#fff" stroke="#3890a0" strokeWidth="1.3" />
    <text x="2.5" y="11.5" fontSize="10.5" fontStyle="italic" fill="#203880" textLength="12" lengthAdjust="spacingAndGlyphs">f(x)</text>
  </svg>,
  <ToolFrame>
    <circle cx="8.5" cy="8" r="3.5" fill="none" stroke="#284890" strokeWidth="1.2" />
  </ToolFrame>,
];

const DRAW_TOOLS = [
  <ToolFrame>
    <path d="M3 7.5l2.5-3 2 2 2.5-2.5 1.5 2 2.5-2" fill="none" stroke="#a02050" />
    <path d="M3 12.5l2.5-3 2 2 2.5-2.5 1.5 2 2.5-2" fill="none" stroke="#a02050" />
  </ToolFrame>,
  <span className="text-[11px] font-bold tracking-tighter text-[#4050e0]">RSI</span>,
  <svg width="17" height="17" viewBox="0 0 17 17">
    <path d="M12 6Q11 4 8.5 4Q5.5 4 5.5 6.2Q5.5 8 8.5 8.8T12 11.5Q12 14 9 14Q6.5 14 5 12.5" fill="none" stroke="#c05050" strokeWidth="2.6" />
    <path d="M7.5 0.5l-4 4.5h5zM5 16h9" fill="#a83838" stroke="#904040" />
  </svg>,
  <svg width="17" height="17" viewBox="0 0 17 17" fill="#1850a8">
    <path d="M8.5 0.5l4 4h-8zM8.5 16.5l4-4h-8zM0.5 8.5l4-4v8zM16.5 8.5l-4-4v8z" />
    <path d="M8.5 4v9M4 8.5h9" stroke="#1850a8" strokeWidth="1.5" />
    <rect x="7" y="7" width="3" height="3" fill="#90b8f0" />
  </svg>,
  <svg width="17" height="17" viewBox="0 0 17 17">
    <path d="M3 11l8.5-9 3 3-8.5 8.5z" fill="#f0a848" stroke="#986030" strokeWidth="0.8" />
    <path d="M3 11l3 2.5-4.5 2z" fill="#503828" />
    <path d="M10.5 3.5l3 2.5" stroke="#c05838" strokeWidth="2" />
  </svg>,
];

const REFRESH_TOOL = (
  <ToolFrame>
    <path d="M4 7.5q0.5-3.5 4-3.5h1.5M13 8.5q-0.5 3.5-4 3.5h-1.5" fill="none" stroke="#60b838" strokeWidth="2" />
    <path d="M2.5 6.5h4.5l-2 3zM14.5 9.5h-4.5l2-3z" fill="#60b838" />
  </ToolFrame>
);

function Toolbar() {
  const cell = "flex h-[23px] items-center justify-center";
  return (
    <aside className="flex w-[30px] shrink-0">
      <div className="w-[20px] border-l border-white bg-[#f0f0f0] pt-[69px] text-[11px] text-[#203878]">
        {CHART_TOOLS.map((tool, i) => (
          <div key={i} className={cell}>{tool}</div>
        ))}
        <div className="mt-[4px] mb-[3px] h-px bg-[#909090]" />
        {DRAW_TOOLS.map((tool, i) => (
          <div key={i} className={cell}>{tool}</div>
        ))}
        <div className="mt-[3px] mb-[4px] h-px bg-[#909090]" />
        <div className={cell}><ToolText text="F5" /></div>
        <div className={cell}>{REFRESH_TOOL}</div>
        {["1", "5", "15", "30", "60"].map((label) => (
          <div key={label} className={cell}>{label}</div>
        ))}
        <div className={clsx(cell, "mt-px border-t border-[#a0a0a0] bg-white text-xs")}>日</div>
        {["周", "月", "N", "多"].map((label) => (
          <div key={label} className={clsx(cell, "text-xs")}>{label}</div>
        ))}
      </div>
      <div className="grow bg-linear-to-r from-[#707070] via-[#d8d8d8] via-50% to-[#fafafa]" />
    </aside>
  );
}

function Banner() {
  return (
    <div className="absolute top-0 left-[417px] h-[81px] w-[800px] bg-[#7fabda]">
      <svg width="800" height="81" viewBox="417 0 800 81">
        <text x="434" y="59" fontSize="56" fontWeight="900" fill="#180082" textLength="279" className="font-['Noto_Sans_CJK_SC',sans-serif]">
          公式指标网
        </text>
        <g fill="none" strokeWidth="9">
          <path d="M743.5 39A34.5 34.5 0 0 1 769 7.5" stroke="#d95f4b" />
          <path d="M786 7.5A34.5 34.5 0 0 1 811.5 39" stroke="#d95f4b" />
          <path d="M811.5 41.5A34.5 34.5 0 0 1 772 74.3" stroke="#e8cb4a" />
        </g>
        {/* Spade coin */}
        <g fill="#e8cb4a">
          <path d="M771 2h13.5l-3 15h11.5v22h-31v-22h11z" />
          <path d="M762.5 41h30.5v27l-9 1.5-4.500-18.500h-4.500l-4.500 18.500-10-4 2-17z" />
        </g>
        <path d="M761 27h10M761 48.5h10M785 48.5h9M761 57.5h10M785 57.5h9M783.5 17v21" stroke="#7fabda" strokeWidth="1" />
        <circle cx="777.7" cy="7.5" r="2.7" fill="#7fabda" stroke="#6c8c88" strokeWidth="0.8" />
        <path id="logo-arc" d="M740 43A38 38 0 0 0 774 78.5" fill="none" />
        <text fontSize="8" fontWeight="700" fill="#fff" className="font-['Liberation_Sans',sans-serif]">
          <textPath href="#logo-arc">www.9m8.cn</textPath>
        </text>
        <text x="847" y="54" fontSize="56" fontWeight="700" fill="#fff" stroke="#fff" strokeWidth="2" textLength="355" lengthAdjust="spacingAndGlyphs" className="font-['DejaVu_Serif',serif]">
          www.9m8.cn
        </text>
      </svg>
    </div>
  );
}

export default function App() {
  return (
    <div className="relative flex h-[743px] w-[1217px] flex-col overflow-hidden bg-black font-['Liberation_Sans','Noto_Sans_CJK_SC',sans-serif]">
      {/* Menu bar */}
      <header className="flex h-[16px] shrink-0 overflow-hidden border-b border-[#909090] bg-linear-to-b from-[#f0f0f0] to-[#cccccc] pl-[8px] text-xs leading-[10px] text-[#181818]">
        <span className="w-[76px] -indent-px">展市场行情</span>
        <span className="w-[43px]">资讯</span>
        <span className="w-[43px]">工具</span>
        <span className="w-[43px]">帮助</span>
        <span className="h-[15px] w-[42px] border-x border-[#b8a8a8] bg-[#f4e4e4] pl-[2px] text-[#e01818]">股票池</span>
      </header>

      <div className="flex min-h-0 grow">
        <div className="w-[10px] shrink-0 border-r border-[#e8b8b8] bg-white" />

        {/* Vertical page tabs */}
        <nav className="w-[17px] shrink-0 border-r border-[#a81818] pt-px">
          {SIDE_TABS.map(({ chars, h, active }) => (
            <div
              key={chars.join("")}
              className={clsx(
                "flex flex-col items-center justify-center border-t border-l border-[#901818] pt-px text-xs leading-[12px]",
                h,
                active ? "text-[#40e8e8]" : "text-[#b8b8b8]",
              )}
            >
              {chars.map((c) => (
                <span key={c}>{c}</span>
              ))}
            </div>
          ))}
          <svg width="16" height="10" viewBox="0 0 16 10">
            <path d="M0 0.5L16 9" stroke="#a81818" />
          </svg>
        </nav>

        <main className="flex w-[936px] shrink-0 flex-col text-xs">
          <div className="flex h-[22px] shrink-0 border-b border-[#a81818] pl-[3px] text-[13px] leading-[22px] text-[#b8b8b8]">
            {PERIODS.map(([label, w]) => (
              <span key={label} className={clsx("shrink-0 whitespace-nowrap", w)}>
                {label === "日线" ? <span className="inline-block h-[22px] border-b border-[#30c8c8] text-[#30d8d0]">{label}</span> : label}
              </span>
            ))}
          </div>

          <div className="flex h-[19px] shrink-0 items-center whitespace-nowrap text-[#c0c0c0]">
            <span className="w-[122px] pl-px">启迪设计(日线.前复权)</span>
            <span className="w-[86px]">日内突破(30,5)</span>
            <span className="text-white">HHN: 41.10</span>
            <Arrow className="mr-[8px] ml-[2px]" />
            <span className="w-[64px] text-[#ffff40]">LLN: 24.22</span>
            <span className="text-[#c828c8]">MID: 32.66</span>
          </div>
          <PriceChart />

          <div className="flex h-[15px] shrink-0 items-center whitespace-nowrap text-white">
            <span className="w-[108px]">VOLUME: 29776.48</span>
            <Arrow up className="mr-[7px]" />
            <span className="w-[82px]">MA5: 11155.90</span>
            <Arrow up className="mr-[7px]" />
            <span className="w-[89px] text-[#ffff40]">MA10: 11504.55</span>
            <Arrow up />
          </div>
          <VolumeChart />

          <div className="flex h-[16px] shrink-0 items-center whitespace-nowrap text-[#c0c0c0]">
            <span className="w-[60px]">逃顶+抄底</span>
            <span className="w-[67px] text-[#3878a0]">底背离: 0.00</span>
            <span className="w-[14px]"><Arrow /></span>
            <span className="w-[102px] text-[#803878]">顶背离: 0.00</span>
            <span className="w-[59px]"><Arrow /></span>
            <span className="w-[74px] text-[#30d830]">股价线: 26.71</span>
            <span className="w-[14px]"><Arrow up /></span>
            <span className="w-[74px] text-[#d81818]">趋势线: 11.81</span>
            <span className="w-[14px]"><Arrow up /></span>
            <span className="w-[43px] text-[#30d830]">: 90.00</span>
            <span className="w-[42px] text-white">: 50.00</span>
            <span className="w-[34px] text-white">: 0.00</span>
            <span className="w-[79px] text-[#c828c8]">准备建仓: 0.02</span>
            <span className="w-[14px]"><Arrow /></span>
            <span className="w-[81px] text-[#30d8d8]">建仓区: 100.00</span>
            <span className="w-[59px]"><Arrow up /></span>
            <span className="w-[13px]"><Arrow up /></span>
            <span className="text-[#ffff40]">下单: 0.</span>
          </div>
          <OscillatorChart />

          {/* Date scale */}
          <div className="flex h-[16px] shrink-0 text-[12.5px] leading-[17px] text-[#d84848]">
            {MONTHS.map(([label, w], i) => (
              <span
                key={i}
                className={clsx(
                  "shrink-0 whitespace-nowrap",
                  w,
                  i > 0 ? "border-l border-[#a81818] pl-px" : "pl-[2px]",
                  i === 4 && "bg-[#000090] text-xs leading-[17px] text-[#d8d8ff]",
                )}
              >
                {label}
              </span>
            ))}
            <span className="grow border-l border-[#a81818] pl-[12px] text-xs leading-[17px] text-[#c0c0c0]">日线</span>
          </div>

          {/* Template tabs, cut off by the window edge */}
          <div className="flex h-[5px] shrink-0 items-start overflow-hidden border-t border-[#a81818] leading-[16px] whitespace-nowrap text-[#c8c8c8]">
            <span className="w-[31px] shrink-0 border-r border-[#a81818] pl-[3px]">指标</span>
            <span className="w-[31px] shrink-0 border-r border-[#a81818] pl-[3px]">模板</span>
            <span className="w-[31px] shrink-0 border-r border-[#a81818] pl-[3px] text-[#30d8d8]">管理</span>
            <span className="w-[68px] shrink-0 border-r border-[#a81818] pl-[4px]">最大化</span>
            <span className="w-[54px] shrink-0 border-r border-[#a81818] pl-[3px]">基本</span>
            <span className="w-[48px] shrink-0 border-r border-[#a81818] pl-[3px]">小笔</span>
            <span className="w-[30px] shrink-0 border-r border-[#a81818] pl-[3px]">小笔</span>
            <span className="w-[56px] shrink-0 border-r border-[#a81818] pl-[3px]">资金小笔</span>
            <span className="w-[44px] shrink-0 border-r border-[#a81818] pl-[3px]">主板慢</span>
            <span className="w-[44px] shrink-0 border-r border-[#a81818] pl-[3px]">高能讯</span>
            <span className="w-[44px] shrink-0 border-r border-[#a81818] pl-[3px]">黄金眼</span>
          </div>
        </main>

        <QuotePanel />
        <Toolbar />
      </div>

      <Banner />
    </div>
  );
}
